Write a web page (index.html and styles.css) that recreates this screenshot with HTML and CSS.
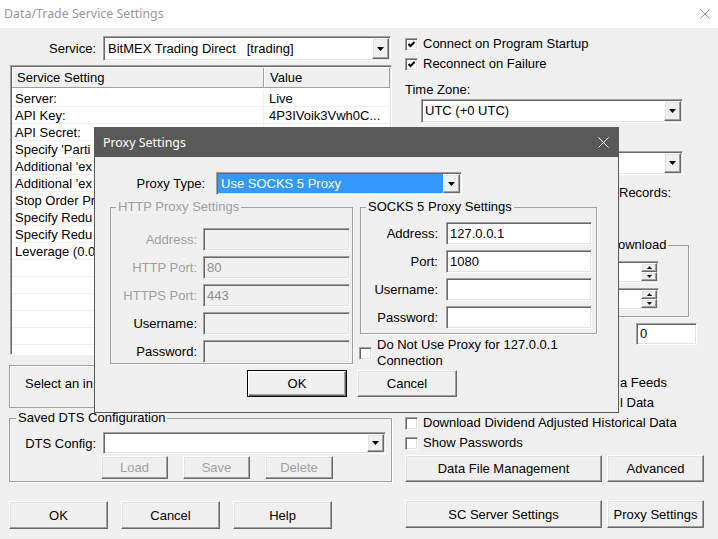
FILE: index.html
```html
<!DOCTYPE html>
<html>
<head>
<meta charset="utf-8">
<title>Data/Trade Service Settings</title>
<link rel="stylesheet" href="styles.css">
</head>
<body>
<div class="window">
  <div class="titlebar">
    <span class="title">Data/Trade Service Settings</span>
    <svg class="x" width="10" height="10" viewBox="0 0 10 10"><path d="M0.5 0.5L9.5 9.5M9.5 0.5L0.5 9.5"/></svg>
  </div>
  <div class="content">
    <div class="col-left">
      <div class="service-row">
        <span class="svc-lbl">Service:</span>
        <div class="combo sunken svc-combo"><span class="val">BitMEX Trading Direct   [trading]</span><span class="dd raised"><svg width="7" height="4" viewBox="0 0 7 4"><path d="M0 0h7L3.5 4z"/></svg></span></div>
      </div>
      <div class="list sunken">
        <div class="lv-head"><div class="hc c1">Service Setting</div><div class="hc c2">Value</div></div>
        <div class="lv-body">
          <div class="lv-row"><div class="c1">Server:</div><div class="c2">Live</div></div>
          <div class="lv-row"><div class="c1">API Key:</div><div class="c2">4P3IVoik3Vwh0C...</div></div>
          <div class="lv-row"><div class="c1">API Secret:</div><div class="c2"></div></div>
          <div class="lv-row"><div class="c1">Specify 'Parti</div><div class="c2"></div></div>
          <div class="lv-row"><div class="c1">Additional 'ex</div><div class="c2"></div></div>
          <div class="lv-row"><div class="c1">Additional 'ex</div><div class="c2"></div></div>
          <div class="lv-row"><div class="c1">Stop Order Pr</div><div class="c2"></div></div>
          <div class="lv-row"><div class="c1">Specify Redu</div><div class="c2"></div></div>
          <div class="lv-row"><div class="c1">Specify Redu</div><div class="c2"></div></div>
          <div class="lv-row"><div class="c1">Leverage (0.0</div><div class="c2"></div></div>
          <div class="lv-row"><div class="c1"></div><div class="c2"></div></div>
          <div class="lv-row"><div class="c1"></div><div class="c2"></div></div>
          <div class="lv-row"><div class="c1"></div><div class="c2"></div></div>
          <div class="lv-row"><div class="c1"></div><div class="c2"></div></div>
          <div class="lv-row"><div class="c1"></div><div class="c2"></div></div>
          <div class="lv-row"><div class="c1"></div><div class="c2"></div></div>
        </div>
      </div>
      <div class="info">Select an in</div>
      <fieldset class="group dts">
        <legend>Saved DTS Configuration</legend>
        <div class="dts-row">
          <span class="dts-lbl">DTS Config:</span>
          <div class="combo sunken dts-combo"><span class="val"></span><span class="dd raised"><svg width="7" height="4" viewBox="0 0 7 4"><path d="M0 0h7L3.5 4z"/></svg></span></div>
        </div>
        <div class="dts-btns">
          <button class="btn raised disabled w67">Load</button>
          <button class="btn raised disabled w67">Save</button>
          <button class="btn raised disabled w68">Delete</button>
        </div>
      </fieldset>
      <div class="main-btns">
        <button class="btn raised">OK</button>
        <button class="btn raised">Cancel</button>
        <button class="btn raised">Help</button>
      </div>
    </div>

    <div class="col-right">
      <div class="check first"><span class="cb sunken"><svg width="7" height="7" viewBox="0 0 7 7"><path d="M0.5 3L2.5 5L6.5 1"/></svg></span><span>Connect on Program Startup</span></div>
      <div class="check"><span class="cb sunken"><svg width="7" height="7" viewBox="0 0 7 7"><path d="M0.5 3L2.5 5L6.5 1"/></svg></span><span>Reconnect on Failure</span></div>
      <div class="tz-lbl">Time Zone:</div>
      <div class="combo sunken tz-combo"><span class="val">UTC (+0 UTC)</span><span class="dd raised"><svg width="7" height="4" viewBox="0 0 7 4"><path d="M0 0h7L3.5 4z"/></svg></span></div>
      <div class="combo sunken tz-combo second"><span class="val"></span><span class="dd raised"><svg width="7" height="4" viewBox="0 0 7 4"><path d="M0 0h7L3.5 4z"/></svg></span></div>
      <div class="frag records">Records:</div>
      <fieldset class="group dl">
        <legend>ownload</legend>
        <div class="spin sunken"><span class="spin-btns"><span class="sb raised"><svg width="5" height="3" viewBox="0 0 5 3"><path d="M0 3h5L2.5 0z"/></svg></span><span class="sb raised"><svg width="5" height="3" viewBox="0 0 5 3"><path d="M0 0h5L2.5 3z"/></svg></span></span></div>
        <div class="spin sunken gap"><span class="spin-btns"><span class="sb raised"><svg width="5" height="3" viewBox="0 0 5 3"><path d="M0 3h5L2.5 0z"/></svg></span><span class="sb raised"><svg width="5" height="3" viewBox="0 0 5 3"><path d="M0 0h5L2.5 3z"/></svg></span></span></div>
      </fieldset>
      <div class="edit sunken zero">0</div>
      <div class="frag feeds">a Feeds</div>
      <div class="frag data">l Data</div>
      <div class="check"><span class="cb sunken"></span><span>Download Dividend Adjusted Historical Data</span></div>
      <div class="check"><span class="cb sunken"></span><span>Show Passwords</span></div>
      <div class="right-btns r1">
        <button class="btn raised wide">Data File Management</button>
        <button class="btn raised narrow">Advanced</button>
      </div>
      <div class="right-btns r2">
        <button class="btn raised wide">SC Server Settings</button>
        <button class="btn raised narrow">Proxy Settings</button>
      </div>
    </div>
  </div>

  <div class="dialog">
    <div class="dlg-title">
      <span>Proxy Settings</span>
      <svg class="x" width="11" height="11" viewBox="0 0 11 11"><path d="M0.5 0.5L10.5 10.5M10.5 0.5L0.5 10.5"/></svg>
    </div>
    <div class="dlg-body">
      <div class="ptype-row">
        <span class="ptype-lbl">Proxy Type:</span>
        <div class="combo sunken ptype-combo"><span class="val selected">Use SOCKS 5 Proxy</span><span class="dd raised"><svg width="7" height="4" viewBox="0 0 7 4"><path d="M0 0h7L3.5 4z"/></svg></span></div>
      </div>
      <div class="groups">
        <fieldset class="group http">
          <legend class="dim">HTTP Proxy Settings</legend>
          <div class="frow"><span class="flbl dim">Address:</span><div class="edit sunken off"></div></div>
          <div class="frow"><span class="flbl dim">HTTP Port:</span><div class="edit sunken off">80</div></div>
          <div class="frow"><span class="flbl dim">HTTPS Port:</span><div class="edit sunken off">443</div></div>
          <div class="frow"><span class="flbl">Username:</span><div class="edit sunken off"></div></div>
          <div class="frow"><span class="flbl">Password:</span><div class="edit sunken off"></div></div>
        </fieldset>
        <div class="socks-col">
          <fieldset class="group socks">
            <legend>SOCKS 5 Proxy Settings</legend>
            <div class="frow"><span class="flbl">Address:</span><div class="edit sunken">127.0.0.1</div></div>
            <div class="frow"><span class="flbl">Port:</span><div class="edit sunken">1080</div></div>
            <div class="frow"><span class="flbl">Username:</span><div class="edit sunken"></div></div>
            <div class="frow"><span class="flbl">Password:</span><div class="edit sunken"></div></div>
          </fieldset>
          <div class="check local"><span class="cb sunken"></span><span class="local-txt">Do Not Use Proxy for 127.0.0.1 Connection</span></div>
        </div>
      </div>
      <div class="dlg-btns">
        <button class="btn raised default">OK</button>
        <button class="btn raised">Cancel</button>
      </div>
    </div>
  </div>
</div>
</body>
</html>
```
FILE: styles.css
```css
* { box-sizing: border-box; }
html, body { margin: 0; padding: 0; }
body {
  background: #f0f0f0;
  font-family: "Liberation Sans", Arial, sans-serif;
  font-size: 13px;
  line-height: 16px;
  color: #000;
}
.window { position: relative; width: 718px; height: 539px; overflow: hidden; background: #f0f0f0; }

/* title bar */
.titlebar {
  height: 28px; background: #fff;
  display: flex; align-items: center; justify-content: space-between;
  padding: 0 8px 0 4px;
}
.title { font-family: "Noto Sans", "Open Sans", sans-serif; font-size: 12.4px; color: #999; }
.titlebar .x path { stroke: #999; stroke-width: 1; fill: none; }

/* 3D edges */
.sunken {
  background: #fff;
  border: 1px solid; border-color: #a0a0a0 #fff #fff #a0a0a0;
  box-shadow: inset 1px 1px #696969, inset -1px -1px #e3e3e3;
}
.raised {
  background: #f0f0f0;
  border: 1px solid; border-color: #fff #696969 #696969 #fff;
  box-shadow: inset -1px -1px #a0a0a0, inset 1px 1px #e3e3e3;
}

.btn {
  font-family: inherit; font-size: 13px; color: #000; padding: 0; margin: 0;
  display: flex; align-items: center; justify-content: center;
}
.btn.disabled { color: #a0a0a0; }

/* combo */
.combo { display: flex; padding: 1px; }
.combo .val { flex: 1; padding-left: 2px; white-space: pre; display: flex; align-items: center; overflow: hidden; }
.combo .dd { width: 17px; flex: none; display: flex; align-items: center; justify-content: center; }
.combo .dd svg path { fill: #000; }

/* edit */
.edit { height: 23px; padding: 0 3px; display: flex; align-items: center; white-space: nowrap; }
.edit.off { background: #f0f0f0; color: #8f8f8f; }

/* checkbox */
.check { display: flex; align-items: center; height: 20px; white-space: nowrap; }
.cb { width: 13px; height: 13px; flex: none; margin-right: 5px; display: flex; align-items: center; justify-content: center; }
.cb svg path { stroke: #000; stroke-width: 2; fill: none; }

/* group box */
.group { margin: 0; min-width: 0; border: 1px solid #a0a0a0; box-shadow: 1px 1px #fff; }
.group legend { padding: 0 2px; line-height: 16px; }
.dim { color: #a0a0a0; }

/* layout */
.content { display: flex; padding-left: 9px; }
.col-left { width: 384px; flex: none; display: flex; flex-direction: column; }
.col-right { width: 300px; flex: none; margin-left: 12px; display: flex; flex-direction: column; }

.service-row { display: flex; align-items: center; margin-top: 8px; height: 25px; }
.svc-lbl { width: 87px; text-align: right; margin-right: 7px; }
.svc-combo { width: 288px; height: 25px; }
.svc-combo .val { padding-left: 3px; }

/* list view */
.list { margin: 4px 0 0 1px; width: 382px; height: 290px; padding: 1px; overflow: hidden; }
.lv-head { display: flex; height: 21px; background: #f0f0f0; border-bottom: 1px solid #a0a0a0; }
.hc { display: flex; align-items: center; padding: 1px 0 0 5px; box-shadow: inset 1px 1px #fff, inset -1px 0 #a0a0a0; }
.c1 { width: 252px; flex: none; white-space: nowrap; overflow: hidden; }
.c2 { width: 126px; flex: none; white-space: nowrap; overflow: hidden; }
.hc.c2 { padding-left: 6px; }
.lv-body { padding-top: 2px; background: #fff; }
.lv-row { display: flex; height: 17px; border-bottom: 1px solid #f0f0f0; }
.lv-row .c1 { padding: 1px 0 0 3px; border-right: 1px solid #f0f0f0; }
.lv-row .c2 { padding: 1px 0 0 5px; }

.info {
  margin-top: 10px; height: 43px; width: 383px;
  border: 1px solid #a0a0a0; box-shadow: inset 1px 1px #fff;
  padding: 10px 0 0 15px; white-space: nowrap; overflow: hidden;
}

.dts { margin-top: 2px; width: 383px; padding: 6px 0 2px 6px; }
.dts-row { display: flex; align-items: center; }
.dts-lbl { width: 80px; text-align: right; margin-right: 7px; padding-top: 1px; }
.dts-combo { width: 283px; height: 22px; }
.dts-btns { display: flex; gap: 15px; margin: 2px 0 0 85px; }
.dts-btns .btn { height: 23px; }
.w67 { width: 67px; }
.w68 { width: 68px; }

.main-btns { display: flex; gap: 13px; margin-top: 19px; }
.main-btns .btn { width: 99px; height: 28px; }

/* right column */
.check.first { margin-top: 6px; }
.tz-lbl { margin-top: 8px; }
.tz-combo { margin: 1px 0 0 16px; width: 262px; height: 24px; }
.tz-combo.second { margin-top: 28px; }
.frag { white-space: nowrap; }
.records { margin: 10px 0 0 214px; }
.dl { margin: 36px 0 0 135px; width: 149px; padding: 8px 15px 6px 75px; }
.spin { height: 22px; width: 52px; padding: 1px; display: flex; justify-content: flex-end; margin-left: -9px; }
.spin.gap { margin-top: 5px; }
.spin-btns { width: 16px; display: flex; flex-direction: column; }
.sb { flex: 1; display: flex; align-items: center; justify-content: center; }
.sb svg path { fill: #000; }
.zero { margin: 6px 0 0 231px; width: 61px; height: 22px; }
.feeds { margin: 28px 0 0 215px; height: 20px; line-height: 20px; }
.data { margin-left: 215px; height: 20px; line-height: 20px; }
.right-btns { display: flex; gap: 5px; }
.right-btns.r1 { margin-top: 2px; }
.right-btns.r1 .btn { height: 27px; }
.right-btns.r2 { margin-top: 18px; }
.right-btns.r2 .btn { height: 28px; }
.wide { width: 197px; }
.narrow { width: 97px; }

/* proxy dialog (window over the main one) */
.dialog {
  position: absolute; left: 94px; top: 127px;
  width: 525px; height: 286px;
  border: 1px solid #595959; background: #f0f0f0;
}
.dlg-title {
  height: 29px; background: #595959; color: #fff;
  display: flex; align-items: center; justify-content: space-between;
  padding: 0 9px 0 8px;
  font-family: "Noto Sans", "Open Sans", sans-serif; font-size: 12.4px;
}
.dlg-title .x path { stroke: #fff; stroke-width: 1; fill: none; }
.dlg-body { padding-top: 15px; }
.ptype-row { display: flex; align-items: center; height: 23px; }
.ptype-lbl { width: 110px; text-align: right; margin-right: 11px; }
.ptype-combo { width: 246px; height: 23px; }
.ptype-combo .val.selected { background: #3399ff; color: #fff; padding-left: 3px; }

.groups { display: flex; align-items: flex-start; margin-top: 4px; padding-left: 15px; }
.http { width: 243px; padding: 13px 2px 0 5px; }
.frow { display: flex; align-items: center; }
.frow + .frow { margin-top: 5px; }
.flbl { text-align: right; white-space: nowrap; }
.http .flbl { width: 81px; margin-right: 6px; }
.http .edit { width: 147px; }
.socks-col { margin-left: 6px; width: 238px; }
.socks { margin-left: 1px; width: 237px; padding: 7px 4px 4px 5px; }
.socks .flbl { width: 72px; margin-right: 8px; }
.socks .edit { width: 146px; }
.check.local { margin-top: 3px; height: auto; white-space: normal; }
.local-txt { width: 185px; }
.dlg-btns { display: flex; gap: 10px; margin: 1px 0 0 152px; }
.dlg-btns .btn { width: 100px; height: 27px; }
.btn.default {
  border: 1px solid #000;
  box-shadow: inset 1px 1px #fff, inset -1px -1px #696969, inset -2px -2px #a0a0a0;
}
```
